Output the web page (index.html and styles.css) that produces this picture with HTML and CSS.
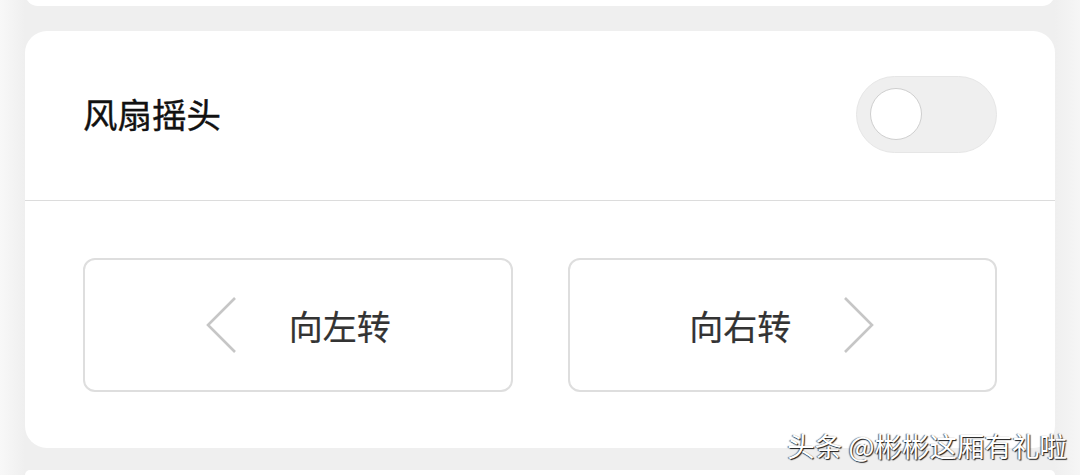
FILE: index.html
```html
<!DOCTYPE html>
<html lang="zh">
<head>
<meta charset="utf-8">
<link rel="stylesheet" href="styles.css">
</head>
<body>
<div class="page">
  <div class="card card-prev"></div>
  <div class="card main">
    <div class="header">
      <div class="title">风扇摇头</div>
      <div class="toggle"><div class="knob"></div></div>
    </div>
    <div class="actions">
      <div class="btn">
        <svg class="chev" width="32" height="56" viewBox="0 0 32 56"><path d="M30 1 L3 28 L30 55" fill="none" stroke="#c6c6c6" stroke-width="2.6"/></svg>
        <span class="label">向左转</span>
      </div>
      <div class="btn">
        <span class="label">向右转</span>
        <svg class="chev" width="32" height="56" viewBox="0 0 32 56"><path d="M2 1 L29 28 L2 55" fill="none" stroke="#c6c6c6" stroke-width="2.6"/></svg>
      </div>
    </div>
  </div>
  <div class="card card-next"></div>
</div>
<div class="watermark">头条 @彬彬这厢有礼啦</div>
</body>
</html>
```
FILE: styles.css
```css
html, body {
  margin: 0;
  padding: 0;
}
body {
  width: 1080px;
  height: 475px;
  overflow: hidden;
  position: relative;
  background: linear-gradient(to right, #f8f8f8 0px, #efefef 25px, #efefef 1055px, #f6f6f6 1080px);
  font-family: "Noto Sans CJK SC", "Noto Sans", sans-serif;
}
.page {
  padding: 0 25px;
  display: flex;
  flex-direction: column;
}
.card {
  background: #fff;
  border-radius: 22px;
}
.card-prev {
  height: 26px;
  margin-top: -20px;
}
.main {
  margin-top: 25px;
  height: 417px;
  display: flex;
  flex-direction: column;
}
.card-next {
  margin-top: 22px;
  height: 5px;
  border-radius: 22px 22px 0 0;
}
.header {
  height: 169px;
  border-bottom: 1px solid #dcdcdc;
  display: flex;
  align-items: center;
  justify-content: space-between;
  padding: 0 58px 0 58px;
}
.title {
  font-size: 34.5px;
  color: #111;
  line-height: 1;
  margin-top: -4px;
  -webkit-text-stroke: 0.4px #111;
}
.toggle {
  width: 141px;
  height: 77px;
  box-sizing: border-box;
  border: 1px solid #e6e6e6;
  background: #efefef;
  border-radius: 40px;
  display: flex;
  align-items: center;
  padding-left: 13px;
  margin-top: -3px;
}
.knob {
  width: 52px;
  height: 52px;
  box-sizing: border-box;
  border-radius: 50%;
  background: #fff;
  border: 1px solid #cfcfcf;
}
.actions {
  display: flex;
  gap: 55px;
  padding: 57px 58px 0 58px;
}
.btn {
  flex: 1;
  height: 134px;
  box-sizing: border-box;
  border: 2px solid #dedede;
  border-radius: 12px;
  display: flex;
  align-items: center;
  justify-content: center;
  gap: 52px;
}
.label {
  font-size: 34px;
  color: #333;
  line-height: 1;
  margin-top: 2px;
  -webkit-text-stroke: 0.2px #333;
}
.chev {
  display: block;
}
.watermark {
  position: absolute;
  right: 13px;
  bottom: 16px;
  font-size: 27.5px;
  color: #fff;
  text-shadow: 1px 1px 1px rgba(0,0,0,0.9), -1px 0 1px rgba(0,0,0,0.6);
  line-height: 1;
}
```
